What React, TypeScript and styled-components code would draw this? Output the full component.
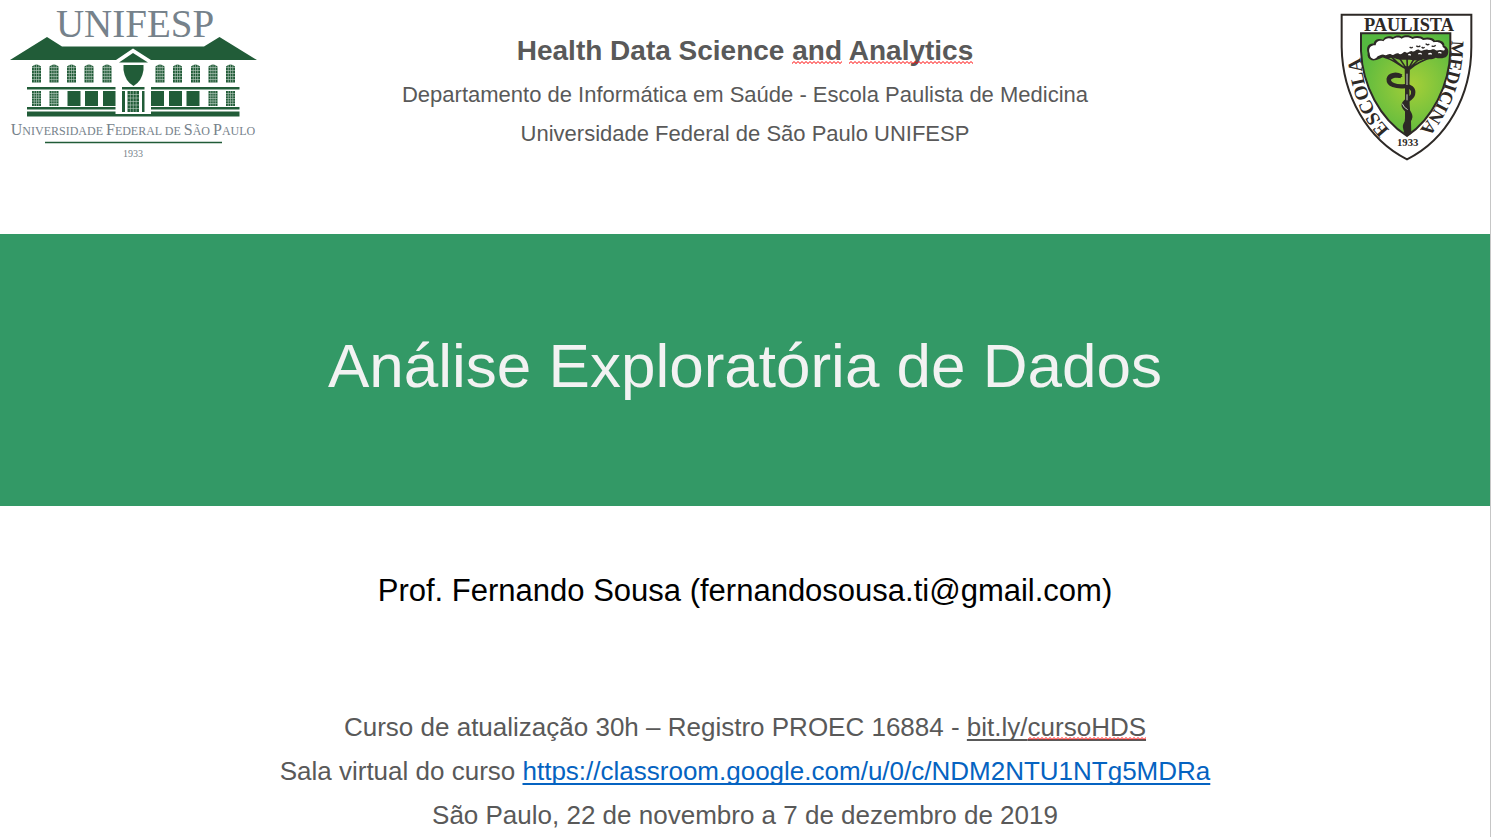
import React from "react";
import styled, { createGlobalStyle } from "styled-components";

const GlobalStyle = createGlobalStyle`
  * { box-sizing: border-box; }
  body {
    margin: 0;
    background: #ffffff;
    font-family: "Liberation Sans", Arial, sans-serif;
  }
`;

const Slide = styled.main`
  display: flex;
  flex-direction: column;
  min-height: 100vh;
  border-right: 1px solid #c6c6c6;
  text-align: center;
  color: #595959;
`;

const Header = styled.header`
  display: grid;
  grid-template-columns: 1fr auto 1fr;
  align-items: start;
  min-height: 234px;
`;

const LogoSlot = styled.div<{ $end?: boolean }>`
  display: flex;
  justify-content: ${(p) => (p.$end ? "flex-end" : "flex-start")};
  padding-top: ${(p) => (p.$end ? 5 : 0)}px;

  svg {
    display: block;
    flex: none;
  }
`;

const Institution = styled.div`
  padding-top: 27px;
`;

const CourseName = styled.h2`
  margin: 0;
  font-size: 28px;
  line-height: 48px;
  font-weight: 700;
`;

const InstitutionLine = styled.p`
  margin: 0;
  font-size: 22px;
  line-height: 39px;
`;

const Band = styled.section`
  display: flex;
  align-items: center;
  justify-content: center;
  min-height: 272px;
  padding-bottom: 8px;
  background: #339966;
`;

const Title = styled.h1`
  margin: 0;
  font-size: 62px;
  line-height: 72px;
  font-weight: 400;
  color: #f2f2f2;
`;

const Author = styled.p`
  margin: 0;
  padding: 63px 0 93px;
  font-size: 31px;
  line-height: 43px;
  color: #000000;
`;

const Details = styled.footer`
  font-size: 26px;
  line-height: 44px;

  p {
    margin: 0;
  }
`;

const Link = styled.a<{ $color: string }>`
  color: ${(p) => p.$color};
  text-decoration: underline;
  text-decoration-thickness: 2px;
  text-decoration-skip-ink: none;
  text-underline-offset: 3px;
`;

const squiggle = `url("data:image/svg+xml,%3Csvg xmlns='http://www.w3.org/2000/svg' width='4' height='3'%3E%3Cpath d='M-1 3.5 2 .5 5 3.500' fill='none' stroke='%23ff0000' stroke-width='1'/%3E%3C/svg%3E")`;

const Misspelt = styled.span`
  position: relative;

  &::after {
    content: "";
    position: absolute;
    left: 0;
    right: 0;
    bottom: 2px;
    height: 3px;
    background: ${squiggle} left bottom / 4px 3px repeat-x;
  }
`;

const green = "#215c38";

const PaneWindow = ({ x, y, w, h, arched }: { x: number; y: number; w: number; h: number; arched?: boolean }) => (
  <g>
    <path
      d={
        arched
          ? `M${x} ${y + h}V${y + 2}Q${x + w / 2} ${y - 2} ${x + w} ${y + 2}V${y + h}Z`
          : `M${x} ${y}h${w}v${h}h${-w}Z`
      }
      fill={green}
    />
    <path
      d={
        [1, 2, 3].map((i) => `M${x + (w * i) / 4} ${y}v${h}`).join("") +
        [1, 2, 3, 4, 5].map((i) => `M${x} ${y + (h * i) / 6}h${w}`).join("")
      }
      stroke="#fff"
      strokeWidth=".6"
      opacity=".7"
    />
  </g>
);

const UnifespLogo = () => (
  <svg width="266" height="165" viewBox="0 0 266 165" role="img" aria-label="UNIFESP">
    <g fontFamily='"Liberation Serif", serif' textAnchor="middle" fill="#76828b">
      <text x="135" y="37" fontSize="39">UNIFESP</text>
      <text x="133" y="135" fontSize="12">
        <tspan fontSize="16">U</tspan>NIVERSIDADE <tspan fontSize="16">F</tspan>EDERAL DE{" "}
        <tspan fontSize="16">S</tspan>ÃO <tspan fontSize="16">P</tspan>AULO
      </text>
      <text x="133" y="157" fontSize="10">1933</text>
    </g>
    <g fill={green}>
      <path d="M10 60 47 37 62 46.500H204L219.500 37 257 60H151L133 48.500 116 60Z" />
      <path d="M119 62.500 133 53 148 62.500Z" />
      <path d="M123.500 65H143.500V70Q142 81 133.500 86Q125 81 123.500 70Z" />
      <path d="M27 87H115.500V89.500H27ZM122 87H144.500V89.500H122ZM151 87H239.500V89.500H151Z" />
      <path d="M27 107H115.500V109.500H27ZM151 107H239.500V109.500H151Z" />
      <path d="M27 111.500H115.500V114H151V111.500H239.500V116.500H27Z" />
      <path d="M122 91H125V112H122ZM142 91H144.500V112H142Z" />
      <path d="M67.500 91H80.500V106H67.500ZM85 91H98V106H85ZM103 91H115.500V106H103ZM151 91H164V106H151ZM169 91H182V106H169ZM186.500 91H199.500V106H186.500Z" />
    </g>
    {[32, 49.5, 67, 84.5, 102.5, 155.5, 173, 191, 208.5, 226].map((x) => (
      <PaneWindow key={x} x={x} y={64.5} w={9} h={18} arched />
    ))}
    {[32, 49.5, 208.5, 226].map((x) => (
      <PaneWindow key={x} x={x} y={91} w={9} h={15} />
    ))}
    <PaneWindow x={127.5} y={91} w={11.5} h={21} />
    <path d="M45 142.500H222" stroke={green} strokeWidth="1.300" />
  </svg>
);

const ink = "#2d2926";

const MedicineCrest = () => (
  <svg width="160" height="160" viewBox="-3 0 480 480" role="img" aria-label="Escola Paulista de Medicina">
    <defs>
      <radialGradient id="field" gradientUnits="userSpaceOnUse" cx="245" cy="240" r="175">
        <stop offset="0" stopColor="#a5cf38" />
        <stop offset="1" stopColor="#55b840" />
      </radialGradient>
      <path id="leftSide" d="M176 374C122 322 88 232 85 102" />
      <path id="rightSide" d="M361 106C360 214 330 304 248 396" />
    </defs>
    <path
      d="M32 29H421V126C421 272 347 404 228 463C110 404 34 272 32 126Z"
      fill="#fff"
      stroke={ink}
      strokeWidth="6"
    />
    <path
      d="M90 85H358V138C355 241 304 342 228 393C147 342 94 241 90 138Z"
      fill="url(#field)"
      stroke={ink}
      strokeWidth="6"
    />
    <g fontFamily='"Liberation Serif", serif' fontWeight="700" fill={ink}>
      <text x="234" y="78" fontSize="55" textAnchor="middle">PAULISTA</text>
      <text fontSize="58">
        <textPath href="#leftSide">ESCOLA</textPath>
      </text>
      <text fontSize="55">
        <textPath href="#rightSide">MEDICINA</textPath>
      </text>
      <text x="230" y="422" fontSize="32" textAnchor="middle">1933</text>
    </g>
    <path
      d="M110 144C104 126 114 114 128 116C130 102 146 100 156 104C162 92 178 92 186 97C194 90 206 90 212 95C222 89 236 90 244 96C256 90 272 93 278 99C292 95 308 99 312 107C328 103 342 112 340 122C352 126 356 142 348 153C338 163 322 160 314 158C302 166 290 162 278 162C266 170 250 166 236 164C220 164 204 166 192 160C180 156 170 162 160 158C150 156 140 168 122 166C112 162 108 154 110 144Z"
      fill={ink}
    />
    <path
      d="M115 142C112 128 121 120 134 121C136 107 148 106 157 109C164 98 176 98 185 103C193 96 206 96 212 101C222 95 236 96 244 102C256 96 270 99 276 105C290 101 304 104 308 112C322 108 336 116 335 126C346 132 342 138 332 136C324 132 318 140 312 134C304 130 298 138 290 134C280 132 272 142 264 134C254 132 250 144 242 138C234 138 230 148 222 140C214 142 210 152 202 145C194 142 188 154 180 148C172 144 168 154 158 149C150 148 146 152 140 154C134 162 128 164 123 160C115 156 118 148 115 142Z"
      fill="#fff"
    />
    <path d="M256 122q6 6 12 0M284 116q5 6 11 1M302 122q6 5 12-1M236 126q5 5 9 0M272 126q4 5 9 1" fill="none" stroke={ink} strokeWidth="4" />
    <path d="M262 147q6-4 10 1M292 148q6-5 10 0M322 144q5-4 9 1M232 150q4-3 7 1" fill="none" stroke="#fff" strokeWidth="4" />
    <g fill="none" stroke={ink}>
      <path d="M158 156C184 162 202 178 220 188M180 154C194 170 210 182 222 190M206 160 224 188M228 158 229 190M250 160 234 188M274 158C258 164 246 180 236 190M304 156C274 166 250 180 236 192" strokeWidth="5" />
      <path
        d="M211 214C194 205 175 210 173 222C172 240 196 245 216 244C238 241 250 252 246 268C242 284 214 288 218 302C222 316 238 318 238 336C238 350 220 352 222 366C223 378 231 378 231 388"
        strokeWidth="13"
      />
    </g>
    <path d="M221 184H237L235 250L236 300L240 350L241 386L228 394L218 382L222 340L222 250Z" fill={ink} />
    <path d="M173 216C184 204 200 204 215 214L205 219C196 218 188 216 178 226Z" fill={ink} />
    <path d="M228 206V240M228 268V286M214 296Q218 308 230 314" fill="none" stroke="#c9d3c0" strokeWidth="3" />
  </svg>
);

export default function App() {
  return (
    <>
      <GlobalStyle />
      <Slide>
        <Header>
          <LogoSlot>
            <UnifespLogo />
          </LogoSlot>
          <Institution>
            <CourseName>
              Health Data Science <Misspelt>and</Misspelt> <Misspelt>Analytics</Misspelt>
            </CourseName>
            <InstitutionLine>Departamento de Informática em Saúde - Escola Paulista de Medicina</InstitutionLine>
            <InstitutionLine>Universidade Federal de São Paulo UNIFESP</InstitutionLine>
          </Institution>
          <LogoSlot $end>
            <MedicineCrest />
          </LogoSlot>
        </Header>
        <Band>
          <Title>Análise Exploratória de Dados</Title>
        </Band>
        <Author>Prof. Fernando Sousa (fernandosousa.ti@gmail.com)</Author>
        <Details>
          <p>
            Curso de atualização 30h – Registro PROEC 16884 -{" "}
            <Link $color="#595959" href="https://bit.ly/cursoHDS">
              bit.ly/<Misspelt>cursoHDS</Misspelt>
            </Link>
          </p>
          <p>
            Sala virtual do curso{" "}
            <Link $color="#0563c1" href="https://classroom.google.com/u/0/c/NDM2NTU1NTg5MDRa">
              https://classroom.google.com/u/0/c/NDM2NTU1NTg5MDRa
            </Link>
          </p>
          <p>São Paulo, 22 de novembro a 7 de dezembro de 2019</p>
        </Details>
      </Slide>
    </>
  );
}
